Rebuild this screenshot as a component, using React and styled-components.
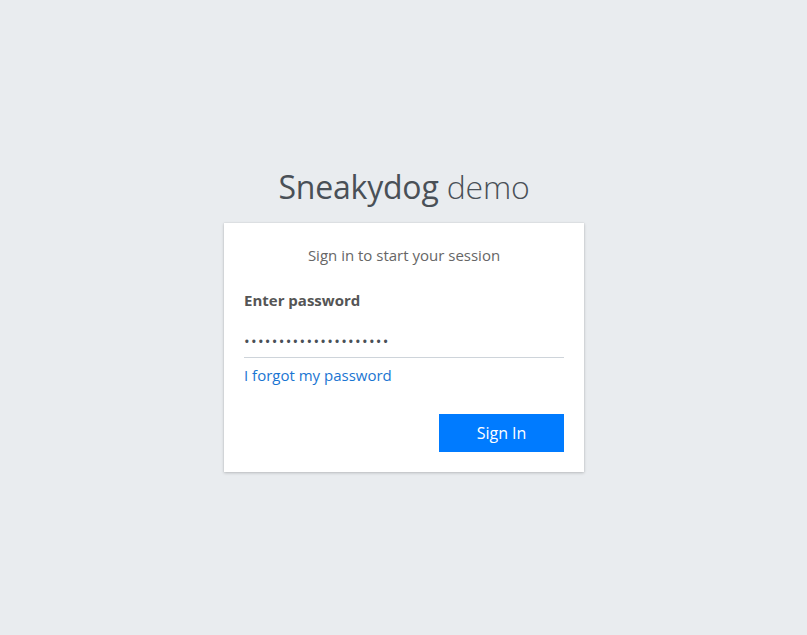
import React from "react";
import styled, { createGlobalStyle } from "styled-components";

const GlobalStyle = createGlobalStyle`
  html, body {
    margin: 0;
    padding: 0;
    background: #e9ecef;
    font-family: "Open Sans", "Noto Sans", sans-serif;
  }
`;

const Page = styled.div`
  min-height: 100vh;
  display: flex;
  flex-direction: column;
  align-items: center;
  justify-content: center;
`;

const LoginBox = styled.div`
  width: 360px;
  margin: 3px 0 0 1px;
`;

const Logo = styled.div`
  text-align: center;
  font-size: 32px;
  color: #495057;
  margin-bottom: 16px;
  line-height: 1.3;
  letter-spacing: -0.2px;

  b {
    font-weight: 400;
  }
  span {
    font-weight: 300;
  }
`;

const Card = styled.div`
  background: #fff;
  box-shadow: 0 0 1px rgba(0, 0, 0, 0.125), 0 1px 3px rgba(0, 0, 0, 0.2);
  padding: 20px 20px 20px;
`;

const Message = styled.p`
  margin: 0 0 23px;
  text-align: center;
  color: #666;
  font-size: 15px;
  line-height: 24px;
`;

const Label = styled.label`
  display: block;
  font-weight: 700;
  font-size: 15px;
  color: #555;
  margin-bottom: 21px;
`;

const PasswordInput = styled.input`
  display: block;
  width: 100%;
  box-sizing: border-box;
  border: none;
  border-bottom: 1px solid #ced4da;
  outline: none;
  padding: 0 0 6px;
  font-size: 15px;
  color: #495057;
  letter-spacing: 1.3px;
  font-family: inherit;
`;

const ForgotLink = styled.a`
  display: inline-block;
  margin-top: 7px;
  color: #1a75d2;
  font-size: 15px;
  text-decoration: none;
`;

const Actions = styled.div`
  display: flex;
  justify-content: flex-end;
  margin-top: 28px;
`;

const SignInButton = styled.button`
  width: 125px;
  height: 38px;
  border: none;
  background: #007bff;
  color: #fff;
  font-size: 16px;
  font-family: inherit;
  cursor: pointer;
`;

export default function App() {
  return (
    <>
      <GlobalStyle />
      <Page>
        <LoginBox>
          <Logo>
            <b>Sneakydog</b> <span>demo</span>
          </Logo>
          <Card>
            <Message>Sign in to start your session</Message>
            <Label htmlFor="pw">Enter password</Label>
            <PasswordInput id="pw" type="password" defaultValue="aaaaaaaaaaaaaaaaaaaaa" />
            <ForgotLink href="#">I forgot my password</ForgotLink>
            <Actions>
              <SignInButton>Sign In</SignInButton>
            </Actions>
          </Card>
        </LoginBox>
      </Page>
    </>
  );
}
